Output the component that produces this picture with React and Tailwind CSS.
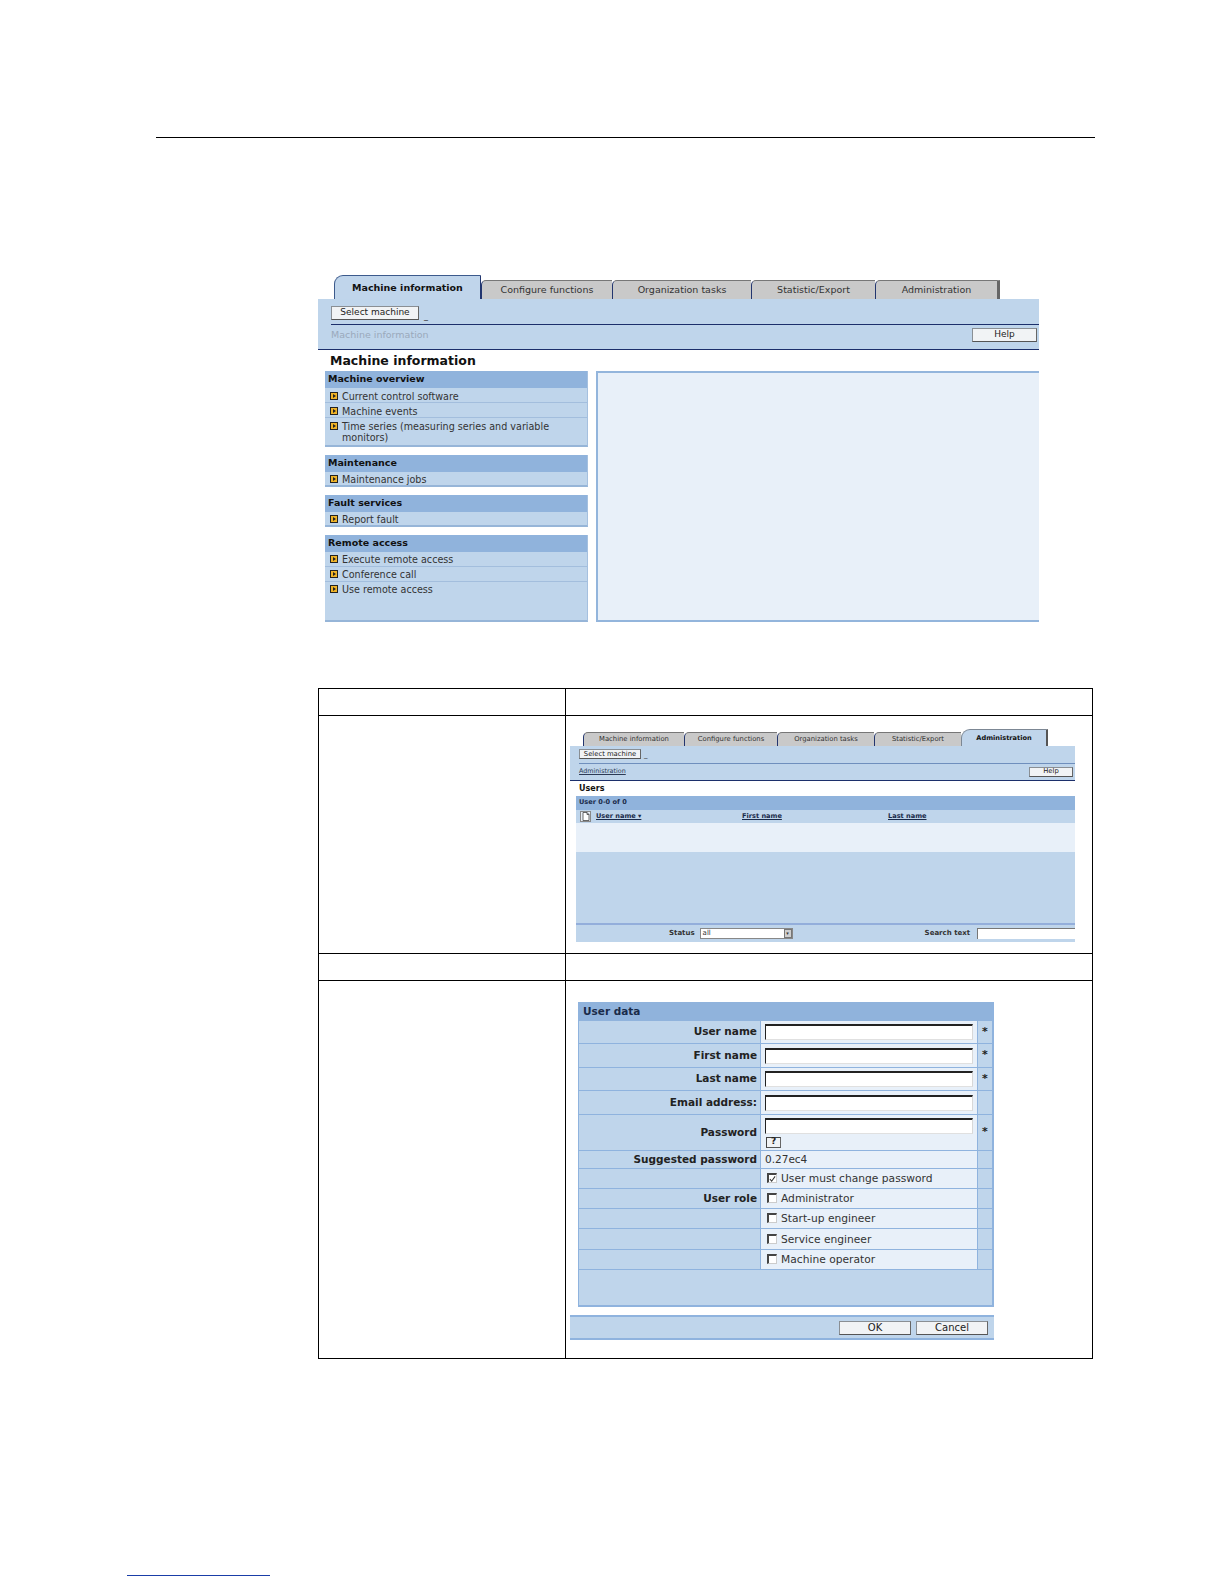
function Tab({ w, label, active, last, small }) {
  const base = small ? "text-[6.8px]" : "text-[9.5px]";
  if (active) {
    return (
      <div
        style={{ width: w }}
        className={`flex items-center justify-center bg-[#c0d5eb] rounded-tl-[9px] border-t border-l font-bold text-[#111] ${small ? "h-[17px] pt-[1px] text-[6.6px] border-[#7c8794] border-r-2 border-r-[#555]" : "h-[24px] pt-[1px] text-[9.5px] border-[#3c5a8c] border-r border-r-[#23366f]"}`}
      >
        {label}
      </div>
    );
  }
  return (
    <div
      style={{ width: w }}
      className={`flex items-center justify-center bg-[#c9c9c9] rounded-tl-[5px] border-t border-t-[#777] border-l border-l-[#23366f] text-[#333] ${base} ${small ? "h-[14px]" : "h-[19px]"} ${last ? "border-r-[3px] border-r-[#666]" : ""}`}
    >
      {label}
    </div>
  );
}

function Btn({ className = "", children }) {
  return (
    <div className={`flex items-center justify-center bg-[#f1f3f5] border border-[#8a8f94] border-b-[#555] border-r-[#666] text-[#222] ${className}`}>
      {children}
    </div>
  );
}

function Arrow() {
  return (
    <span className="mt-[1px] flex h-[8px] w-[8px] shrink-0 items-center justify-center border border-[#222] bg-[#f0b428]">
      <span className="h-0 w-0 border-y-[2px] border-l-[3px] border-y-transparent border-l-[#222]" />
    </span>
  );
}

function NavRow({ label, line, h, tight }) {
  return (
    <div style={{ height: h }} className={`flex gap-[4px] pl-[5px] text-[9.6px] leading-[11px] text-[#333] ${tight ? "pt-[2px]" : "pt-[3px]"} ${line ? "border-b border-[#a3bedd]" : ""}`}>
      <Arrow />
      <span className="w-[225px]">{label}</span>
    </div>
  );
}

function NavBox({ title, rows, tight }) {
  return (
    <div className="w-[263px] bg-[#bfd5eb] border-b-2 border-b-[#96b5d8] border-r border-r-[#a5c0df]">
      <div className="flex h-[17px] items-center bg-[#90b3dc] pl-[3px] text-[9.5px] font-bold text-[#111]">{title}</div>
      {rows.map((r, i) => (
        <NavRow key={r.l} label={r.l} h={r.h} tight={tight} line={i < rows.length - 1} />
      ))}
    </div>
  );
}

function Shot1() {
  return (
    <div className="ml-[318px] mt-[137px] w-[721px]">
      <div className="flex h-[24px] items-end pl-[16px]">
        <Tab w={147} label="Machine information" active />
        <Tab w={131} label="Configure functions" />
        <Tab w={139} label="Organization tasks" />
        <Tab w={124} label="Statistic/Export" />
        <Tab w={125} label="Administration" last />
      </div>
      <div className="h-[51px] bg-[#bfd5eb] border-b border-[#1c2f6b] pl-[13px]">
        <div className="flex h-[26px] items-start gap-[5px] pt-[7px] border-b border-[#1c2f6b]">
          <Btn className="h-[14px] w-[88px] text-[9px]">Select machine</Btn>
          <span className="mt-[8px] text-[8px] leading-[6px] text-[#333]">_</span>
        </div>
        <div className="flex h-[24px] items-center justify-between pb-[4px] pr-[2px]">
          <span className="text-[9.5px] text-[#9aa9bb]">Machine information</span>
          <Btn className="h-[14px] w-[65px] text-[9px]">Help</Btn>
        </div>
      </div>
      <div className="flex h-[21px] items-center pl-[12px] pt-[1px] text-[12.5px] font-bold text-[#111]">Machine information</div>
      <div className="flex pl-[7px]">
        <div className="flex w-[271px] flex-col gap-[8px]">
          <NavBox title="Machine overview" rows={[{ l: "Current control software", h: 15 }, { l: "Machine events", h: 15 }, { l: "Time series (measuring series and variable monitors)", h: 27 }]} />
          <NavBox tight title="Maintenance" rows={[{ l: "Maintenance jobs", h: 13 }]} />
          <NavBox tight title="Fault services" rows={[{ l: "Report fault", h: 13 }]} />
          <NavBox tight title="Remote access" rows={[{ l: "Execute remote access", h: 15 }, { l: "Conference call", h: 15 }, { l: "Use remote access", h: 38 }]} />
        </div>
        <div className="h-[251px] flex-1 bg-[#e8f0f9] border-2 border-r-0 border-[#93b5dc]" />
      </div>
    </div>
  );
}

function Shot2() {
  return (
    <div className="w-[505px]">
      <div className="flex h-[17px] items-end pl-[13px]">
        <Tab small w={101} label="Machine information" />
        <Tab small w={93} label="Configure functions" />
        <Tab small w={97} label="Organization tasks" />
        <Tab small w={87} label="Statistic/Export" />
        <Tab small active w={87} label="Administration" />
      </div>
      <div className="h-[35px] bg-[#bfd5eb] border-b border-[#1c2f6b] pl-[9px]">
        <div className="flex h-[18px] items-start gap-[3px] pt-[3px] border-b border-[#6f8fbd]">
          <Btn className="h-[10px] w-[62px] text-[6.8px]">Select machine</Btn>
          <span className="mt-[3px] text-[7px] leading-[6px] text-[#333]">_</span>
        </div>
        <div className="flex h-[15px] items-center justify-between pr-[2px]">
          <span className="text-[6.4px] text-[#2b3a55] underline">Administration</span>
          <Btn className="h-[10px] w-[44px] text-[6.8px]">Help</Btn>
        </div>
      </div>
      <div className="flex h-[15px] items-center pl-[9px] text-[8px] font-bold text-[#111]">Users</div>
      <div className="ml-[6px] bg-[#bfd5eb]">
        <div className="flex h-[14px] items-center bg-[#90b3dc] pl-[3px] text-[6.6px] font-bold text-[#1a2b4a]">User 0-0 of 0</div>
        <div className="flex h-[13px] items-center text-[6.6px] font-bold text-[#1a2b4a] underline">
          <span className="ml-[4px] flex h-[11px] w-[11px] items-center justify-center border border-[#888] bg-[#e8eef5]">
            <svg width="8" height="9" viewBox="0 0 8 9" fill="#fff" stroke="#444" strokeWidth="0.8"><path d="M1 .5h4l2 2v6H1z M5 .5v2h2" /></svg>
          </span>
          <span className="ml-[5px] w-[146px]">User name ▾</span>
          <span className="w-[146px]">First name</span>
          <span>Last name</span>
        </div>
        <div className="h-[29px] bg-[#e8f0f9]" />
        <div className="h-[73px] border-b-2 border-[#93aedb]" />
        <div className="flex h-[17px] items-center text-[7px] font-bold text-[#333]">
          <span className="ml-[93px] mr-[5px]">Status</span>
          <div className="flex h-[11px] w-[93px] items-center justify-between border border-[#888] bg-white pl-[2px] font-normal">
            <span className="text-[#333]">all</span>
            <span className="flex h-[9px] w-[8px] items-center justify-center border border-[#777] bg-[#cfcfcf] text-[5px] leading-none">▾</span>
          </div>
          <span className="ml-[132px] mr-[7px]">Search text</span>
          <div className="h-[11px] flex-1 border-l border-t border-[#777] bg-white" />
        </div>
      </div>
    </div>
  );
}

function Input() {
  return <div className="h-[16px] w-[208px] border-t-2 border-l border-[#222] border-r border-r-[#d8d8d8] border-b border-b-[#e0e0e0] bg-white" />;
}

function FormRow({ h, label, star, children }) {
  return (
    <div style={{ height: h }} className="flex border-b border-[#8fb3de]">
      <div className="flex w-[182px] items-center justify-end border-r border-[#8fb3de] pr-[3px] text-[10.5px] font-bold text-[#222]">{label}</div>
      <div className="flex w-[217px] flex-col justify-center border-r border-[#8fb3de] bg-[#e8f0f9] pl-[4px]">{children}</div>
      <div className="flex flex-1 items-center justify-center text-[11px] font-bold text-[#222]">{star ? "*" : ""}</div>
    </div>
  );
}

function Check({ label, checked }) {
  return (
    <div className="ml-[2px] flex items-center gap-[4px] pt-[2px] text-[10.7px] text-[#333]">
      <span className="-mt-[2px] flex h-[10px] w-[10px] items-center justify-center border-l-2 border-t-2 border-[#444] border-r border-r-[#ccc] border-b border-b-[#ccc] bg-white">
        {checked ? (
          <svg width="8" height="8" viewBox="0 0 8 8" fill="none" stroke="#333" strokeWidth="1.2"><path d="M1 4l2 2.5L7 1" /></svg>
        ) : null}
      </span>
      {label}
    </div>
  );
}

function Shot3() {
  return (
    <div className="w-[424px]">
      <div className="ml-[8px] w-[416px] bg-[#bfd5eb] border-b-2 border-r-2 border-l border-[#8fb3de]">
        <div className="flex h-[19px] items-center bg-[#90b3dc] pl-[4px] text-[10.5px] font-bold text-[#1a2b4a]">User data</div>
        <FormRow h={23} label="User name" star><Input /></FormRow>
        <FormRow h={24} label="First name" star><Input /></FormRow>
        <FormRow h={23} label="Last name" star><Input /></FormRow>
        <FormRow h={24} label="Email address:"><Input /></FormRow>
        <FormRow h={36} label="Password" star>
          <Input />
          <Btn className="ml-[1px] mt-[3px] h-[11px] w-[15px] border-[#444] text-[9px] font-bold">?</Btn>
        </FormRow>
        <FormRow h={18} label="Suggested password"><span className="text-[10.5px] text-[#333]">0.27ec4</span></FormRow>
        <FormRow h={20}><Check checked label="User must change password" /></FormRow>
        <FormRow h={20} label="User role"><Check label="Administrator" /></FormRow>
        <FormRow h={20}><Check label="Start-up engineer" /></FormRow>
        <FormRow h={21}><Check label="Service engineer" /></FormRow>
        <FormRow h={20}><Check label="Machine operator" /></FormRow>
        <div className="h-[35px]" />
      </div>
      <div className="mt-[8px] flex h-[25px] items-center justify-end gap-[5px] border-y-2 border-[#8fb3de] bg-[#bfd5eb] pr-[6px]">
        <Btn className="h-[14px] w-[72px] text-[10px]">OK</Btn>
        <Btn className="h-[14px] w-[72px] text-[10px]">Cancel</Btn>
      </div>
    </div>
  );
}

export default function App() {
  return (
    <div className="h-[1584px] w-[1224px] overflow-hidden bg-white font-['DejaVu_Sans',sans-serif]">
      <div className="pt-[137px]">
        <div className="ml-[156px] h-px w-[939px] bg-black" />
      </div>
      <Shot1 />
      <div className="ml-[318px] mt-[66px] w-[775px] border border-black">
        <div className="flex h-[27px] border-b border-black">
          <div className="w-[247px] border-r border-black" />
        </div>
        <div className="flex h-[238px] border-b border-black">
          <div className="w-[247px] border-r border-black" />
          <div className="pl-[4px] pt-[13px]"><Shot2 /></div>
        </div>
        <div className="flex h-[27px] border-b border-black">
          <div className="w-[247px] border-r border-black" />
        </div>
        <div className="flex h-[377px]">
          <div className="w-[247px] border-r border-black" />
          <div className="pl-[4px] pt-[21px]"><Shot3 /></div>
        </div>
      </div>
      <div className="ml-[127px] mt-[216px] h-px w-[143px] bg-[#1a3ea8]" />
    </div>
  );
}
